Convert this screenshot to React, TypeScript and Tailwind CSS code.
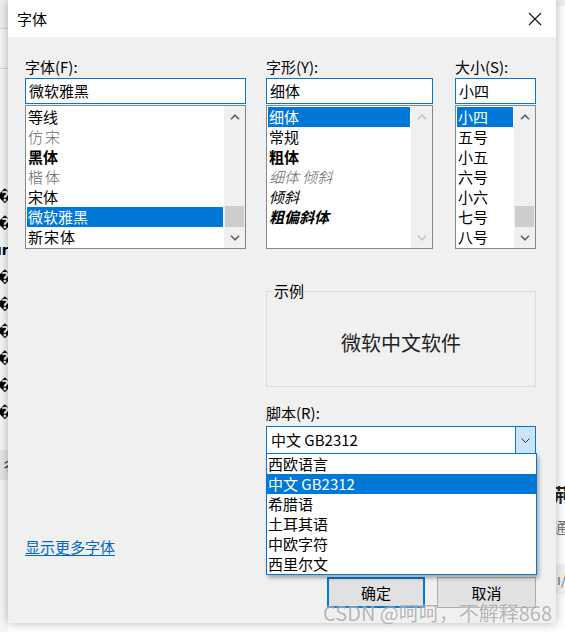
import React from 'react';

const CJK = "font-['Noto_Sans_CJK_SC',sans-serif]";

function Chevron({ up, color }: { up?: boolean; color: string }) {
  return (
    <svg width="10" height="6" viewBox="0 0 10 6" fill="none" stroke={color} strokeWidth="1.6">
      <path d={up ? 'M1 5.2 5 1.2 9 5.2' : 'M1 0.8 5 4.8 9 0.8'} />
    </svg>
  );
}

function ScrollBar({ thumb, disabled }: { thumb?: boolean; disabled?: boolean }) {
  const c = disabled ? '#c4c4c4' : '#606060';
  return (
    <div className="flex w-[21px] shrink-0 flex-col bg-[#f0f0f0]">
      <div className="flex h-[21px] items-center justify-center">
        <Chevron up color={c} />
      </div>
      <div className="flex-1" />
      {thumb && <div className="mx-[1px] h-[21px] bg-[#cdcdcd]" />}
      <div className="flex h-[21px] items-center justify-center">
        <Chevron color={c} />
      </div>
    </div>
  );
}

type Item = { text: string; cls?: string };

function ListBox({ items, selected, thumb, disabled }: { items: Item[]; selected: number; thumb?: boolean; disabled?: boolean }) {
  return (
    <div className="mt-[1px] flex h-[144px] border border-[#828790] bg-white">
      <div className="flex-1 overflow-hidden p-[1px]">
        {items.map((it, i) => (
          <div
            key={it.text}
            className={`h-[20px] whitespace-nowrap pl-[1px] leading-[20px] ${
              i === selected ? 'bg-[#0078d7] text-white' : it.cls ?? ''
            }`}
          >
            {it.text}
          </div>
        ))}
      </div>
      <ScrollBar thumb={thumb} disabled={disabled} />
    </div>
  );
}

function Field({ label, value, width, ml, children }: { label: string; value: string; width: string; ml?: string; children: React.ReactNode }) {
  return (
    <div className={`${width} ${ml ?? ''} shrink-0`}>
      <div className="h-[20px] leading-[20px]">{label}</div>
      <div className="mt-[1px] h-[26px] border border-[#0078d7] bg-white pl-[3px] leading-[24px]">{value}</div>
      {children}
    </div>
  );
}

const fonts: Item[] = [
  { text: '等线' },
  { text: '仿宋', cls: 'text-[#666] tracking-[2px] font-light' },
  { text: '黑体', cls: 'font-semibold' },
  { text: '楷体', cls: 'text-[#666] tracking-[2px] font-light' },
  { text: '宋体' },
  { text: '微软雅黑' },
  { text: '新宋体', cls: 'tracking-[1px]' },
];

const styles: Item[] = [
  { text: '细体' },
  { text: '常规' },
  { text: '粗体', cls: 'font-bold' },
  { text: '细体 倾斜', cls: 'italic text-[#666] font-light' },
  { text: '倾斜', cls: 'italic' },
  { text: '粗偏斜体', cls: 'italic font-bold' },
];

const sizes: Item[] = ['小四', '五号', '小五', '六号', '小六', '七号', '八号'].map((t) => ({ text: t }));

const scripts = ['西欧语言', '中文 GB2312', '希腊语', '土耳其语', '中欧字符', '西里尔文'];

export default function App() {
  return (
    <div className={`relative flex h-[632px] w-[565px] overflow-hidden bg-white text-[15px] text-black ${CJK}`}>
      {/* background window, left edge */}
      <div className="flex w-[8px] shrink-0 flex-col overflow-hidden bg-[#f7f7f7]">
        <div className="h-[29px] shrink-0 border-b border-[#d6d6d6] bg-[#f0f0f0]" />
        <div className="h-[40px] shrink-0 border-b border-[#d6d6d6] bg-[#f5f5f5]" />
        <div className="mt-[114px] -ml-[3px] font-['DejaVu_Sans',sans-serif] text-[14px] font-bold leading-[27px]">
          {['�', '�', 'ır', '�', '�', '�', '�', '�', '�'].map((g, i) => (
            <div key={i}>{g}</div>
          ))}
        </div>
        <div className="mt-[24px] h-[30px] bg-[#e6e6e6] pl-[1px] leading-[30px] text-[#333]">彳</div>
      </div>

      {/* dialog */}
      <div className="z-10 flex h-[623px] w-[548px] shrink-0 flex-col bg-[#f0f0f0] shadow-[0_0_10px_rgba(0,0,0,0.3)]">
        <div className="flex h-[37px] shrink-0 items-center justify-between bg-white pl-[9px] pr-[14px]">
          <span className="leading-[20px]">字体</span>
          <svg width="14" height="14" viewBox="0 0 14 14" stroke="#111" strokeWidth="1.1">
            <path d="M1 1 13 13M13 1 1 13" />
          </svg>
        </div>

        <div className="flex flex-1 flex-col pl-[17px] pr-[20px] pt-[20px]">
          <div className="flex">
            <Field label="字体(F):" value="微软雅黑" width="w-[221px]">
              <ListBox items={fonts} selected={5} thumb />
            </Field>
            <Field label="字形(Y):" value="细体" width="w-[167px]" ml="ml-[20px]">
              <ListBox items={styles} selected={0} disabled />
            </Field>
            <Field label="大小(S):" value="小四" width="w-[81px]" ml="ml-[22px]">
              <ListBox items={sizes} selected={0} thumb />
            </Field>
          </div>

          <div className="mt-[33px] flex">
            <div className="w-[221px] shrink-0" />
            <div className="ml-[20px] w-[270px] shrink-0">
              <fieldset className="border border-[#dcdcdc]">
                <legend className="ml-[6px] px-[1px] leading-[18px]">示例</legend>
                <div className="flex h-[86px] items-center justify-center pb-[1px] text-[20px] text-[#222]">
                  微软中文软件
                </div>
              </fieldset>
              <div className="mt-[16px] h-[20px] leading-[20px]">脚本(R):</div>
              <div className="relative mt-[3px] flex h-[28px] border border-[#0078d7] bg-white">
                <div className="flex-1 pl-[4px] leading-[26px]">中文 GB2312</div>
                <div className="flex w-[20px] items-center justify-center border-l border-[#0078d7] bg-[#cce4f7]">
                  <svg width="9" height="5" viewBox="0 0 9 5" fill="none" stroke="#333" strokeWidth="1">
                    <path d="M0.5 0.5 4.5 4.5 8.5 0.5" />
                  </svg>
                </div>
                <div className="absolute -left-[1px] top-[26px] z-20 w-[271px] border border-[#0078d7] bg-white shadow-[2px_3px_4px_rgba(0,0,0,0.3)]">
                  {scripts.map((s, i) => (
                    <div
                      key={s}
                      className={`h-[20px] pl-[1px] leading-[20px] ${i === 1 ? 'bg-[#0078d7] text-white' : ''}`}
                    >
                      {s}
                    </div>
                  ))}
                </div>
              </div>
            </div>
          </div>

          <div className="mt-[83px] h-[20px] leading-[20px]">
            <span className="text-[#0066cc] underline underline-offset-[2px]">显示更多字体</span>
          </div>

          <div className="mt-[20px] flex justify-end gap-[12px] pr-[0px]">
            <button className="h-[31px] w-[98px] border-2 border-[#0078d7] bg-[#e1e1e1] leading-[27px]">确定</button>
            <button className="h-[31px] w-[99px] border border-[#adadad] bg-[#e1e1e1] leading-[29px]">取消</button>
          </div>
        </div>
      </div>

      {/* background window, right edge */}
      <div className="flex flex-1 flex-col overflow-hidden bg-white">
        <div className="h-[6px] bg-[#f0f0f0]" />
        <div className="mt-[476px] -ml-[3px] text-[18px] font-bold leading-[24px] text-[#222]">荊</div>
        <div className="mt-[10px] -ml-[4px] text-[16px] leading-[22px] text-[#777]">通</div>
        <div className="mt-[26px] h-[30px] bg-[#f3f3f3] pl-[1px] text-[14px] leading-[30px] text-[#777]">ı/</div>
      </div>

      {/* watermark */}
      <div className="absolute left-[323px] top-[600px] z-30 text-[20px] leading-[26px] text-[rgba(120,120,120,0.55)] [text-shadow:0_0_2px_rgba(255,255,255,0.9)]">
        CSDN @呵呵，不解释868
      </div>
    </div>
  );
}
